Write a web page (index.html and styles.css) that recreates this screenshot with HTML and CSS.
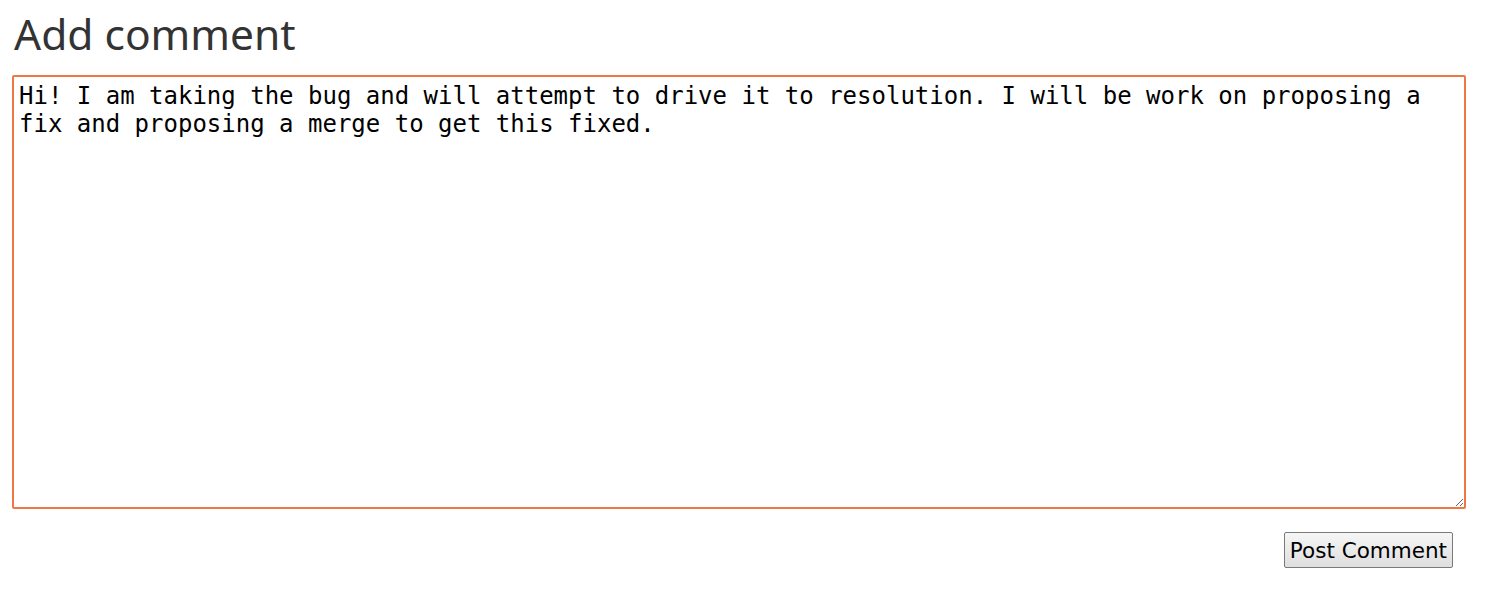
FILE: index.html
```html
<!DOCTYPE html>
<html>
<head>
<meta charset="utf-8">
<link rel="stylesheet" href="styles.css">
</head>
<body>
<div class="page">
  <h1 class="title">Add comment</h1>
  <textarea class="comment">Hi! I am taking the bug and will attempt to drive it to resolution. I will be work on proposing a fix and proposing a merge to get this fixed.</textarea>
  <div class="actions">
    <button class="post">Post Comment</button>
  </div>
</div>
</body>
</html>
```
FILE: styles.css
```css
html, body { margin: 0; padding: 0; background: #fff; }
.page {
  padding: 0 24px 0 12px;
  display: flex;
  flex-direction: column;
}
.title {
  margin: 8px 0 0 2px;
  font-family: "Noto Sans", sans-serif;
  font-weight: 400;
  font-size: 42.5px;
  line-height: 52px;
  color: #333;
  height: 67px;
}
.comment {
  box-sizing: border-box;
  width: 100%;
  height: 434px;
  border: 2px solid #ee7743;
  border-radius: 2px;
  padding: 5px 5px 3px;
  font-family: "DejaVu Sans Mono", monospace;
  font-size: 24px;
  line-height: 28px;
  color: #000;
  outline: none;
  resize: vertical;
}
.actions {
  display: flex;
  justify-content: flex-end;
  padding: 23px 13px 0 0;
}
.post {
  font-family: "DejaVu Sans", sans-serif;
  font-size: 21.5px;
  height: 36px;
  padding: 0 5px;
  border: 1px solid #7a7a7a;
  border-radius: 2px;
  background: linear-gradient(#f6f6f6, #dedede);
  color: #000;
}
```
